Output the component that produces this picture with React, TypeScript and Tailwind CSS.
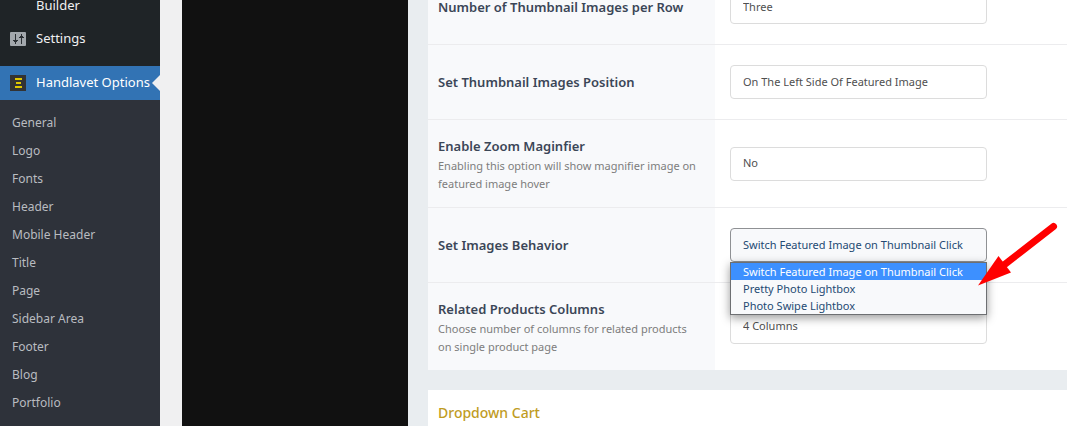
import { useState } from 'react';

const menuItems = [
  'General',
  'Logo',
  'Fonts',
  'Header',
  'Mobile Header',
  'Title',
  'Page',
  'Sidebar Area',
  'Footer',
  'Blog',
  'Portfolio',
];

const behaviors = [
  'Switch Featured Image on Thumbnail Click',
  'Pretty Photo Lightbox',
  'Photo Swipe Lightbox',
];

type FieldProps = {
  id: string;
  label: string;
  description?: string;
  options: string[];
  open?: boolean;
  last?: boolean;
};

export default function App() {
  return (
    <div className="flex h-screen overflow-hidden bg-[#f0f0f1] font-['Noto_Sans',sans-serif]">
      <Sidebar />
      <main className="ml-[22px] flex min-w-0 flex-1">
        <div className="w-[226px] shrink-0 bg-[#111111]" />
        <div className="min-w-0 flex-1 bg-[#e9edf0] pl-5">
          <section className="-mt-[30px] bg-white">
            <Field id="thumbs-per-row" label="Number of Thumbnail Images per Row" options={['Three', 'Two', 'Four']} />
            <Field
              id="thumbs-position"
              label="Set Thumbnail Images Position"
              options={['On The Left Side Of Featured Image', 'Below Featured Image']}
            />
            <Field
              id="zoom"
              label="Enable Zoom Maginfier"
              description="Enabling this option will show magnifier image on featured image hover"
              options={['No', 'Yes']}
            />
            <Field id="behavior" label="Set Images Behavior" options={behaviors} open />
            <Field
              id="related-columns"
              label="Related Products Columns"
              description="Choose number of columns for related products on single product page"
              options={['4 Columns', '3 Columns']}
              last
            />
          </section>
          <section className="mt-5 bg-white px-[10px] pt-3 pb-10">
            <h2 className="text-[14px] leading-[22px] font-medium text-[#bf9c1f]">Dropdown Cart</h2>
          </section>
        </div>
      </main>
    </div>
  );
}

function Sidebar() {
  return (
    <nav className="w-40 shrink-0 overflow-hidden bg-[#1f2427] text-[13px] text-[#f0f0f1]">
      <a href="#builder" className="-mt-1 block pl-9 leading-[18px]">Builder</a>
      <a href="#settings" className="mt-2 flex h-[34px] items-center pl-[10px]">
        <SettingsIcon />
        <span className="ml-[10px]">Settings</span>
      </a>
      <a href="#options" className="relative mt-[10px] flex h-[34px] items-center bg-[#3273b4] pl-[10px] whitespace-nowrap text-white">
        <OptionsIcon />
        <span className="ml-[10px]">Handlavet Options</span>
        <span className="absolute top-[9px] right-0 border-y-8 border-r-8 border-y-transparent border-r-[#f0f0f1]" />
      </a>
      <ul className="bg-[#2e323a] pt-[9px] pb-4 text-[12px] text-[#b9bcc0]">
        {menuItems.map((item) => (
          <li key={item}>
            <a href={`#${item}`} className="block pl-3 leading-7">{item}</a>
          </li>
        ))}
      </ul>
    </nav>
  );
}

function Field({ id, label, description, options, open, last }: FieldProps) {
  const [value, setValue] = useState(options[0]);

  return (
    <div className={`flex ${last ? '' : 'border-b border-[#ececee]'}`}>
      <div className={`flex w-[287px] shrink-0 flex-col justify-center bg-[#f8f9fb] pr-4 pl-[10px] ${description ? 'pt-4 pb-[14px]' : ''}`}>
        <label htmlFor={id} className="text-[13px] leading-[21px] font-semibold text-[#3b4657]">{label}</label>
        {description && <p className="text-[11px] leading-[18px] text-[#7d7d7d]">{description}</p>}
      </div>
      <div className="flex flex-1 items-center px-[15px] py-5">
        <div className="relative w-[257px]">
          <select
            id={id}
            value={value}
            onChange={(e) => setValue(e.target.value)}
            className={`block h-[34px] w-full appearance-none rounded border px-3 text-[11px] ${open ? 'border-[#8f9194] bg-[#f8f9fb] text-[#244a73]' : 'border-[#dcdcdc] bg-white text-[#4f4f4f]'}`}
          >
            {options.map((option) => (
              <option key={option}>{option}</option>
            ))}
          </select>
          {open && <OptionList options={options} value={value} setValue={setValue} />}
          {open && <Arrow />}
        </div>
      </div>
    </div>
  );
}

function OptionList({ options, value, setValue }: { options: string[]; value: string; setValue: (value: string) => void }) {
  return (
    <ul role="listbox" className="absolute top-full left-0 z-10 w-full border border-[#6d6f72] bg-[#f8f9fb] text-[11px] leading-[17px] text-[#244a73] shadow-[0_3px_9px_rgba(0,0,0,0.4)]">
      {options.map((option) => (
        <li
          key={option}
          role="option"
          aria-selected={option === value}
          onClick={() => setValue(option)}
          className={`px-3 whitespace-nowrap ${option === value ? 'bg-[#3d90ff] text-white' : ''}`}
        >
          {option}
        </li>
      ))}
    </ul>
  );
}

function SettingsIcon() {
  return (
    <svg width="16" height="14" viewBox="0 0 16 14" aria-hidden="true">
      <rect width="16" height="14" rx="1" fill="#a2a7ac" />
      <path d="M5.500 2v10M11.500 2v10" stroke="#2a2f33" strokeWidth="1" />
      <path d="M3 8h5v1H3zM4 9h3v1H4zM9 5h5v1H9zM10 4h3v1h-3z" fill="#2a2f33" />
    </svg>
  );
}

function OptionsIcon() {
  return (
    <svg width="16" height="16" viewBox="0 0 16 16" aria-hidden="true">
      <rect width="16" height="16" fill="#333333" />
      <path d="M5 3h7v2H5zM6 7h5v2H6zM5 11h7v2H5z" fill="#e0c800" />
    </svg>
  );
}

function Arrow() {
  return (
    <svg className="absolute -top-[7px] left-[246px] z-20" width="84" height="68" viewBox="0 0 84 68" aria-hidden="true">
      <path d="M77.500 5.500L28 44" stroke="#ff0000" strokeWidth="7" strokeLinecap="round" />
      <path d="M2 64.500L22.500 35L35 51.500z" fill="#ff0000" />
    </svg>
  );
}
